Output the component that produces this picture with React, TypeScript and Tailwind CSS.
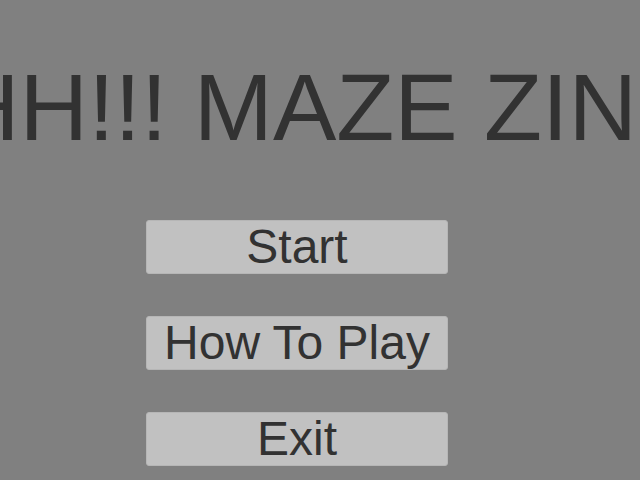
import React from "react";

const MenuButton = ({ label }: { label: string }) => (
  <button className="w-[302px] h-[54px] rounded-[3px] bg-[#c1c1c1] border border-[#b6b6b6] text-[#323232] text-[48px] leading-none flex items-center justify-center">
    {label}
  </button>
);

const App = () => {
  return (
    <div
      className="w-[640px] h-[480px] bg-[#808080] overflow-hidden flex flex-col items-center pr-[46px]"
      style={{ fontFamily: '"Liberation Sans", Arial, sans-serif' }}
    >
      <div className="w-full flex justify-center pt-[60px]">
        <h1 className="whitespace-nowrap text-[95px] leading-none font-normal text-[#323232] mr-[6px]">
          HH!!! MAZE ZIN
        </h1>
      </div>
      <div className="flex flex-col gap-[42px] mt-[65px]">
        <MenuButton label="Start" />
        <MenuButton label="How To Play" />
        <MenuButton label="Exit" />
      </div>
    </div>
  );
};

export default App;
